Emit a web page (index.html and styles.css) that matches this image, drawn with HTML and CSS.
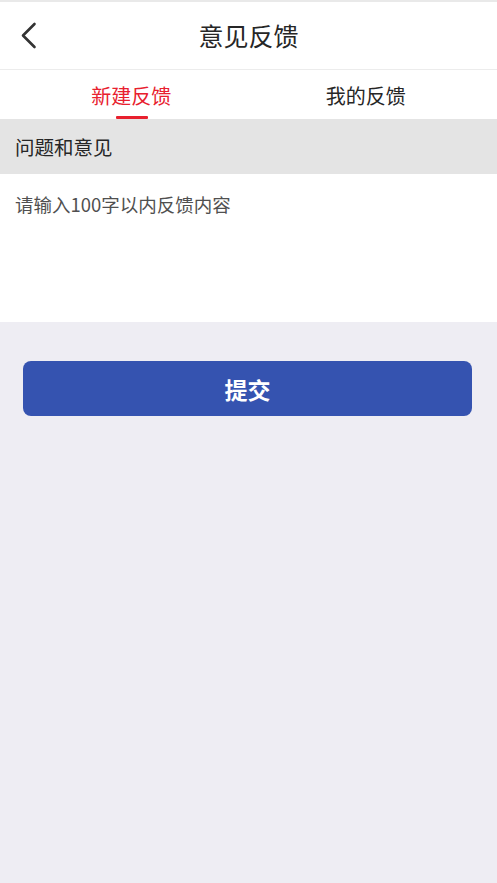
FILE: index.html
```html
<!DOCTYPE html>
<html lang="zh">
<head>
<meta charset="utf-8">
<title>意见反馈</title>
<link rel="stylesheet" href="styles.css">
</head>
<body>
<div class="page">
  <header class="navbar">
    <button class="back" aria-label="返回">
      <svg width="16" height="28" viewBox="0 0 16 28"><path d="M13.5 2 L2 13.5 L13.5 25" fill="none" stroke="#333" stroke-width="2.6" stroke-linecap="round" stroke-linejoin="round"/></svg>
    </button>
    <h1 class="title">意见反馈</h1>
  </header>
  <nav class="tabs">
    <div class="tab active">新建反馈</div>
    <div class="tab">我的反馈</div>
  </nav>
  <div class="section-title">问题和意见</div>
  <div class="input-area">
    <div class="placeholder">请输入100字以内反馈内容</div>
  </div>
  <div class="actions">
    <button class="submit">提交</button>
  </div>
</div>
</body>
</html>
```
FILE: styles.css
```css
* { box-sizing: border-box; }
html, body {
  margin: 0;
  padding: 0;
  height: 100%;
}
body {
  background: #eeedf3;
  font-family: "Noto Sans CJK SC", "Noto Sans", sans-serif;
  color: #333;
}
.page {
  min-height: 100%;
  background: #eeedf3;
}
.navbar {
  height: 70px;
  background: #fff;
  border-top: 2px solid #e9e9e9;
  border-bottom: 1px solid #ececec;
  display: flex;
  align-items: center;
  justify-content: center;
  position: relative;
}
.back {
  position: absolute;
  left: 21px;
  top: 20px;
  border: 0;
  background: none;
  padding: 0;
  width: 16px;
  height: 28px;
  display: flex;
}
.title {
  margin: 0;
  font-size: 25px;
  font-weight: 400;
  color: #262626;
  line-height: 1;
  margin-top: -1px;
}
.tabs {
  height: 49px;
  background: #fff;
  display: flex;
  padding: 0 14px;
}
.tab {
  flex: 1;
  display: flex;
  align-items: center;
  justify-content: center;
  font-size: 20px;
  font-weight: 400;
  color: #262626;
  position: relative;
  padding-top: 2px;
}
.tab.active {
  color: #e8202e;
}
.tab.active::after {
  content: "";
  position: absolute;
  left: 50%;
  bottom: 0;
  width: 32px;
  height: 3px;
  margin-left: -15px;
  background: #e8202e;
  border-radius: 1px;
}
.section-title {
  height: 55px;
  background: #e4e4e4;
  display: flex;
  align-items: center;
  padding-left: 15px;
  font-size: 19.5px;
  font-weight: 400;
  color: #262626;
}
.input-area {
  height: 148px;
  background: #fff;
  padding: 17px 15px 0;
}
.placeholder {
  font-size: 18.5px;
  color: #505050;
  line-height: 26px;
}
.actions {
  padding: 39px 25px 0 23px;
}
.submit {
  display: block;
  width: 100%;
  height: 55px;
  border: 0;
  border-radius: 8px;
  background: #3553b0;
  color: #fff;
  font-family: "Noto Sans CJK SC", "Noto Sans", sans-serif;
  font-size: 23px;
  font-weight: 700;
  padding: 0;
}
```
